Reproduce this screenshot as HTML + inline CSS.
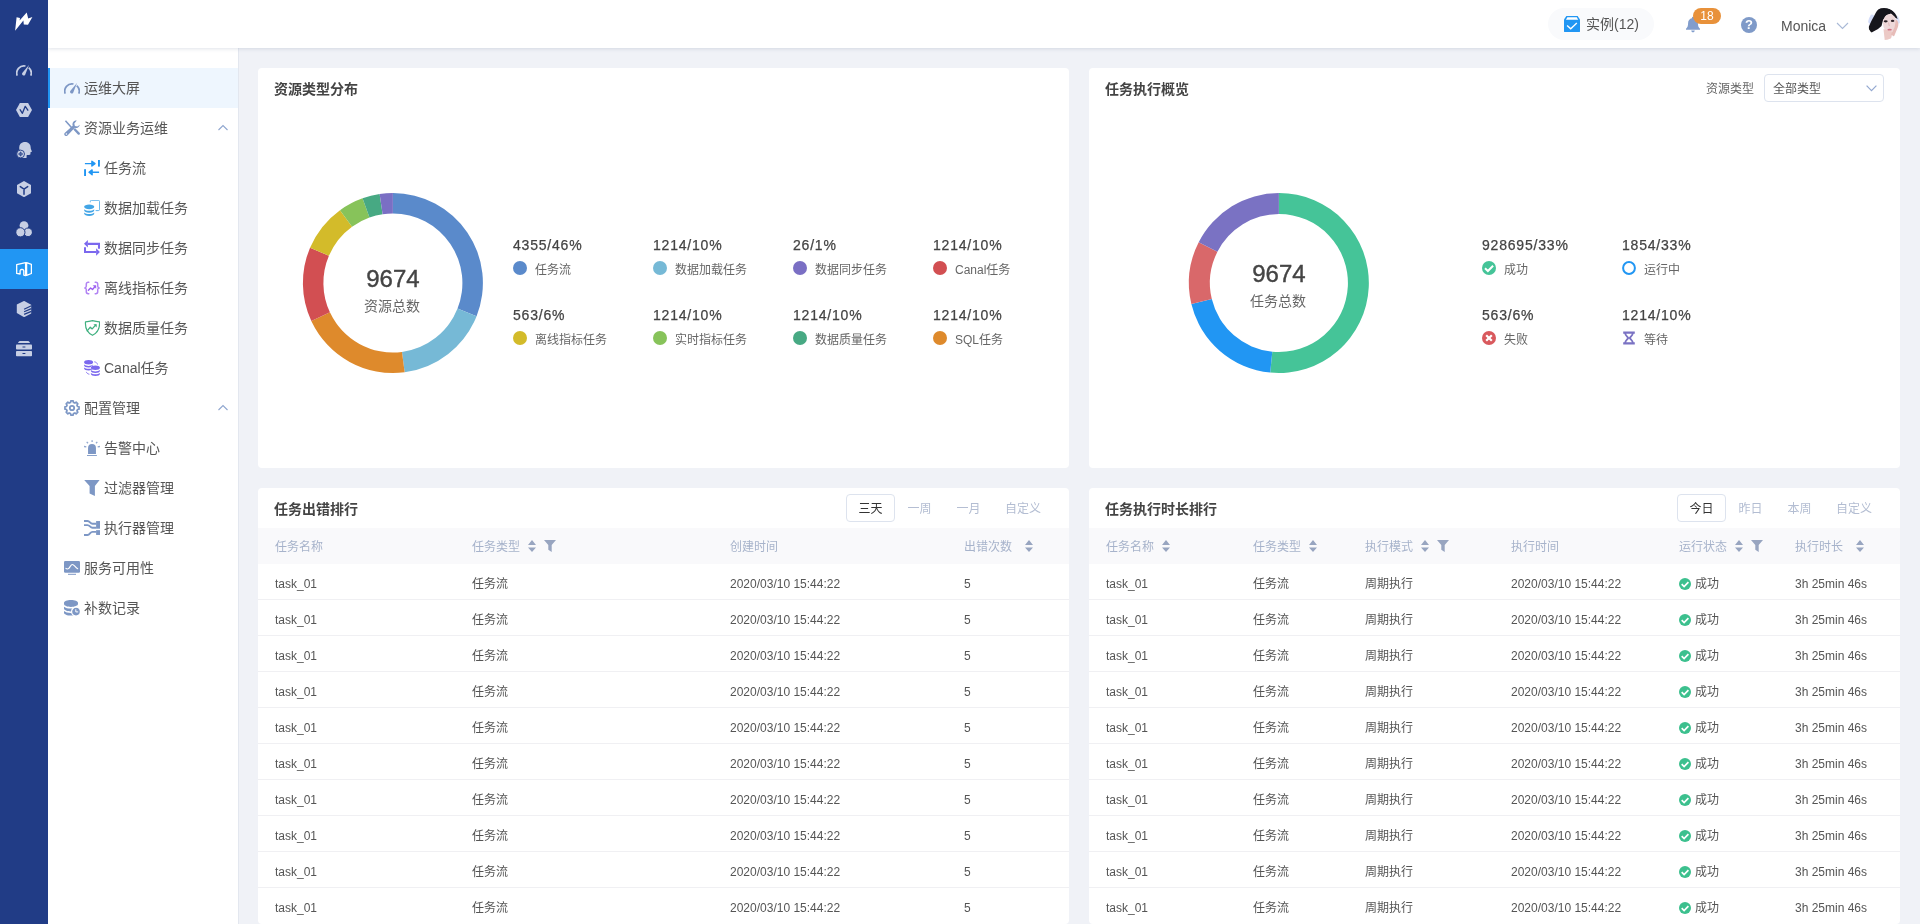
<!DOCTYPE html>
<html lang="zh-CN">
<head>
<meta charset="utf-8">
<title>运维大屏</title>
<style>
*{box-sizing:border-box;margin:0;padding:0}
html,body{width:1920px;height:924px;overflow:hidden}
body{font-family:"Liberation Sans","Noto Sans CJK SC",sans-serif;font-size:12px;color:#555;background:#f0f2f7;position:relative}
.rail{position:absolute;left:0;top:0;width:48px;height:924px;background:#213c86;z-index:5}
.rail .ri{position:absolute;left:0;width:48px;height:40px}
.rail .ri svg{position:absolute;left:15px;top:11px;width:18px;height:18px}
.rail .ri.on{background:#2196f3}
.header{position:absolute;left:48px;top:0;width:1872px;height:48px;background:#fff;box-shadow:0 1px 4px rgba(60,80,120,.16);z-index:4;will-change:transform}
.side{position:absolute;left:48px;top:48px;width:190px;height:876px;background:#fff;box-shadow:1px 0 0 #e3e7ef;z-index:3;will-change:transform}
.mi{position:absolute;left:0;width:190px;height:40px;line-height:40px;font-size:14px;color:#555;white-space:nowrap}
.mi.on{background:#eef6fe;box-shadow:inset 2px 0 0 #2196f3}
.mi svg.ic{position:absolute;top:12px;width:16px;height:16px}
.mi.l1 svg.ic{left:16px}
.mi.l2 svg.ic{left:36px}
.mi.l1 span{position:absolute;left:36px;top:0}
.mi.l2 span{position:absolute;left:56px;top:0}
.mi svg.ar{position:absolute;left:170px;top:16px;width:10px;height:8px}
.card{position:absolute;background:#fff;border-radius:4px;will-change:transform}
.ct{position:absolute;left:16px;top:12px;font-size:14px;font-weight:bold;color:#444;line-height:18px}
/*cards*/
.dn{position:absolute;margin-top:1px;-webkit-text-stroke:.4px #444;width:100px;text-align:center;font-size:24px;line-height:30px;color:#444}
.dl{position:absolute;margin-left:-1px;width:100px;text-align:center;font-size:14px;line-height:20px;color:#666}
.ln{position:absolute;font-size:14px;line-height:20px;color:#444;white-space:nowrap;letter-spacing:.8px;margin-top:1px;-webkit-text-stroke:.25px #444}
.ld{position:absolute;width:14px;height:14px;border-radius:7px}
.li{position:absolute;width:14px;height:14px}
.ll{position:absolute;font-size:12px;line-height:16px;color:#666;white-space:nowrap;margin-top:2px}
.tb{position:absolute;top:6px;height:28px;line-height:30px;text-align:center;font-size:12px;color:#b3bdd2}
.tb.on{border:1px solid #dde3ee;border-radius:4px;line-height:28px;color:#333;background:#fff}
.th{position:absolute;left:0;top:40px;width:811px;height:36px;background:#f9f9fb;color:#a7b3cb;font-size:12px;line-height:36px}
.th span{position:absolute;top:1px;white-space:nowrap}
.tr span{position:absolute;top:2.5px;white-space:nowrap}
.tr:last-child{border-bottom:0}
.so{position:absolute;top:12px;width:8px;height:12px}
.fi{position:absolute;top:12px;width:12px;height:12px}
.tr{position:absolute;left:0;width:811px;height:36px;border-bottom:1px solid #f0f0f3;color:#555;font-size:12px;line-height:35px}
.si{position:absolute;top:14px;width:12px;height:12px}
/*endcards*/
</style>
</head>
<body>
<div class="rail" id="rail"><svg style="position:absolute;left:0;top:0" width="48" height="48" viewBox="0 0 48 48"><path d="M16.6 17.3L20 17.9 19.6 20.6 26.7 12.4 28.2 18.4 32.4 17.1 28 24.7 23.8 24.5 23.4 20.4 15.1 30.8Z" fill="#fff"/></svg><svg style="position:absolute;left:16px;top:62px" width="16" height="16" viewBox="0 0 16 16"><path d="M1.22 13.66A7.25 7.25 0 0 1 9.5 4M12.7 5.6A7.25 7.25 0 0 1 14.78 13.66" fill="none" stroke="#c7cfe4" stroke-width="1.7"/><path d="M13 2.9L9.16 12.72A1.7 1.7 0 0 1 6.24 10.98Z" fill="#c7cfe4"/></svg><svg style="position:absolute;left:16px;top:102px" width="16" height="16" viewBox="0 0 16 16"><path d="M3.9.9h8.2l3.9 7-3.9 7.2H3.9L0 7.9Z" fill="#c7cfe4"/><path d="M4.05 7.7l2.35 3.6 2.85-7 2.6 3.9" fill="none" stroke="#213c86" stroke-width="1.3" stroke-linejoin="round" stroke-linecap="round"/></svg><svg style="position:absolute;left:16px;top:142px" width="16" height="16" viewBox="0 0 16 16"><path d="M9-.1c3.5 0 5.7 2.4 5.7 5.7 0 1 .3 1.7 1.2 3.7v.4l-1.3.3-.2 2c-.1.7-.5.9-1.4.9h-2.3L10.5 16H6V9L3.5 7.7C3.2 6.7 3.2 5.9 3.2 5.4 3.2 2.3 5.6-.1 9-.1Z" fill="#c7cfe4"/><circle cx="4.6" cy="12" r="3.9" fill="#c7cfe4" stroke="#213c86" stroke-width=".9"/><path d="M2.2 12h4.8M4.6 9.6v4.8" stroke="#213c86" stroke-width=".7"/><circle cx="4.6" cy="12" r="1.5" fill="none" stroke="#213c86" stroke-width=".7"/></svg><svg style="position:absolute;left:16px;top:181px" width="16" height="16" viewBox="0 0 16 16"><path d="M8 0l7 4v8.2l-7 4-7-4V4Z" fill="#c7cfe4"/><path d="M4.3 5.6L8 8.2l3.7-2.6M8 8.2v5" fill="none" stroke="#213c86" stroke-width="1.5" stroke-linecap="round"/></svg><svg style="position:absolute;left:16px;top:221px" width="16" height="16" viewBox="0 0 16 16"><circle cx="8" cy="4.6" r="4.4" fill="#c7cfe4"/><circle cx="12.1" cy="11.3" r="4.3" fill="#c7cfe4" stroke="#213c86" stroke-width="1"/><circle cx="4.4" cy="11.3" r="4.6" fill="#c7cfe4" stroke="#213c86" stroke-width="1"/></svg><div style="position:absolute;left:0;top:249px;width:48px;height:40px;background:#2196f3"></div><svg style="position:absolute;left:16px;top:261px" width="16" height="16" viewBox="0 0 16 16"><path d="M9.6 1.6L.7 3.6V12.4L4.1 13V9.9a1.4 1.4 0 0 1 1.4-1.4h.9a1.4 1.4 0 0 1 1.4 1.4V14.1L9.6 14.5ZM10.6 1.6L15.4 3.3V12.5L10.6 14.4Z" fill="none" stroke="#fff" stroke-width="1.3" stroke-linejoin="round"/></svg><svg style="position:absolute;left:16px;top:301px" width="16" height="16" viewBox="0 0 16 16"><path d="M8.1-.1l7.1 3.9v8.8l-7.1 3.6L.8 12.1V3.5Z" fill="#c7cfe4"/><path d="M8.1 8.2L15.4 4.7M8.1 10.8L15.4 7.6M8.1 13.4L15.4 10.4" stroke="#213c86" stroke-width="1.2"/></svg><svg style="position:absolute;left:16px;top:341px" width="16" height="16" viewBox="0 0 16 16"><path d="M4.5-.1h7c1.2 0 2 .9 2.5 2.1H2C2.5.8 3.3-.1 4.5-.1Z" fill="#c7cfe4"/><rect x="0" y="3.4" width="16" height="5.1" rx=".8" fill="#c7cfe4"/><rect x="0" y="9.9" width="16" height="5.4" rx=".8" fill="#c7cfe4"/><path d="M6.9 6h2.1M6.9 12.5h2.1" stroke="#213c86" stroke-width="1" stroke-linecap="round"/></svg></div><!--/rail-->
<div class="header" id="header"><div style="position:absolute;left:1500px;top:8px;width:106px;height:32px;border-radius:16px;background:#f9fafc"></div><svg style="position:absolute;left:1516px;top:16px" width="16" height="16" viewBox="0 0 16 16"><path d="M2.4 0h11.2L16 3.4V15.6a.4.4 0 0 1-.4.4H.4a.4.4 0 0 1-.4-.4V3.4Z" fill="#2196f3"/><path d="M3.4 1.3h9.4l1.4 2.5H1.9Z" fill="#fff"/><path d="M3.1 9.5l3.6 3.3 6.1-5.7" fill="none" stroke="#fff" stroke-width="1.4"/></svg><div style="position:absolute;left:1538px;top:14px;font-size:14px;line-height:20px;color:#555;white-space:nowrap">实例(12)</div><svg style="position:absolute;left:1637px;top:16px" width="16" height="18" viewBox="0 0 16 18"><path d="M8 .8a1.1 1.1 0 0 1 1.1 1.1v.4c2.3.5 3.8 2.4 3.8 4.8 0 3.2.8 4.6 2.1 5.6v1H1v-1c1.3-1 2.1-2.4 2.1-5.6 0-2.4 1.5-4.3 3.8-4.8v-.4A1.1 1.1 0 0 1 8 .8ZM6.2 14.6h3.6a1.8 1.8 0 0 1-3.6 0Z" fill="#829dcc"/></svg><div style="position:absolute;left:1645px;top:8px;width:28px;height:16px;border-radius:8px;background:#e8913a;color:#fff;font-size:12px;line-height:16px;text-align:center">18</div><div style="position:absolute;left:1693px;top:17px;width:16px;height:16px;border-radius:8px;background:#7f9ac8;color:#fff;font-size:13px;font-weight:bold;line-height:16px;text-align:center">?</div><div style="position:absolute;left:1733px;top:16px;font-size:14px;line-height:20px;color:#555">Monica</div><svg style="position:absolute;left:1788px;top:22px" width="13" height="8" viewBox="0 0 13 8"><path d="M1 1l5.5 5.5L12 1" fill="none" stroke="#a9b9d6" stroke-width="1.1"/></svg><svg style="position:absolute;left:1820px;top:8px" width="32" height="32" viewBox="0 0 32 32"><defs><clipPath id="avc"><circle cx="16" cy="16" r="16"/></clipPath><filter id="avb" x="-20%" y="-20%" width="140%" height="140%"><feGaussianBlur stdDeviation=".65"/></filter></defs><g clip-path="url(#avc)"><rect width="32" height="32" fill="#fdfdff"/><g filter="url(#avb)"><ellipse cx="3.5" cy="11.5" rx="4" ry="5" fill="#d3dcf8"/><ellipse cx="30.5" cy="11.5" rx="2.2" ry="4" fill="#dbe3fa"/><path d="M12 .2C15-.8 19.5-.6 22.5 1.2 26 3 28.6 6.5 29.6 11L27 9.5 23 5.5 18 7.5 15 12 13.5 18 10 21 3.6 24.4C1.5 23 .3 21 .9 18.5 2.4 15 4.5 10.5 6.5 7.2 8 4 9.5 1.5 12 .2Z" fill="#17141b"/><ellipse cx="21.8" cy="15.2" rx="6.8" ry="9.2" fill="#eed8d9"/><path d="M15.5 21l1.2 11h6l2-8Z" fill="#ecc9c6"/><path d="M28 11.5c2.5 1.5 3 5 1.5 8.5l-3.5 8.5-3-2 3.5-7Z" fill="#e7bcb8"/><ellipse cx="21.6" cy="21.7" rx="2.2" ry=".9" fill="#cf6e80"/><ellipse cx="17.7" cy="13.3" rx="2" ry="1.1" fill="#2a2025"/><ellipse cx="24.6" cy="12.9" rx="1.8" ry="1.1" fill="#33282d"/><path d="M20.5 14.5l.8 3.5" stroke="#d9b0b0" stroke-width=".8"/></g></g></svg></div><!--/header-->
<div class="side" id="side"><div class="mi l1 on" style="top:20px"><svg class="ic" viewBox="0 0 16 16"><path d="M1.22 13.66A7.25 7.25 0 0 1 9.5 4M12.7 5.6A7.25 7.25 0 0 1 14.78 13.66" fill="none" stroke="#7d97c5" stroke-width="1.7"/><path d="M13 2.9L9.16 12.72A1.7 1.7 0 0 1 6.24 10.98Z" fill="#7d97c5"/></svg><span>运维大屏</span></div><div class="mi l1" style="top:60px"><svg class="ic" viewBox="0 0 16 16"><path d="M.9 1.2L2 .3 9.2 8.2 8 9.3Z" fill="#7d97c5"/><path d="M9.3 9.6l1.7-1.5 4.6 4.7a1.15 1.15 0 0 1-1.7 1.6Z" fill="#7d97c5"/><path d="M11.3.4a4.1 4.1 0 0 0-2.6 5.3L.9 12.7a1.9 1.9 0 0 0 2.6 2.8L10.8 7.8A4.1 4.1 0 0 0 15.9 4.8L13.3 6.6 10.9 6.1 10.3 3.6 12.8.6A4 4 0 0 0 11.3.4Z" fill="#7d97c5"/><circle cx="2.4" cy="14" r=".8" fill="#fff"/></svg><span>资源业务运维</span><svg class="ar" viewBox="0 0 10 8"><path d="M.5 6L5 1.5 9.5 6" fill="none" stroke="#8fa6cf" stroke-width="1.1"/></svg></div><div class="mi l2" style="top:100px"><svg class="ic" viewBox="0 0 16 16"><path d="M.9 3.6h9.3M7.9 1.2l3.1 2.4-3.1 2.4Z" stroke="#2196f3" stroke-width="1.4" fill="#2196f3" stroke-linejoin="round"/><rect x="14" y="0" width="1.9" height="6.6" fill="#2196f3"/><path d="M15.1 12.3H5.8M8.1 9.9L5 12.3l3.1 2.4Z" stroke="#2196f3" stroke-width="1.4" fill="#2196f3" stroke-linejoin="round"/><rect x=".1" y="9.2" width="1.9" height="6.8" fill="#2196f3"/></svg><span>任务流</span></div><div class="mi l2" style="top:140px"><svg class="ic" viewBox="0 0 16 16"><path d="M6.3 2.3V1.6A1.3 1.3 0 0 1 7.6.3h6.7a1.3 1.3 0 0 1 1.3 1.3v7.7a1.3 1.3 0 0 1-1.3 1.3h-2.7" fill="none" stroke="#4aa8e8" stroke-width=".9"/><path d="M.2 6.6C.2 5.4 2.4 4.4 5.2 4.4s5 1 5 2.2v.5c0 1.2-2.2 2.2-5 2.2s-5-1-5-2.2ZM.2 9.3c1 1 2.9 1.5 5 1.5s4-.5 5-1.5v1.2c0 1.2-2.2 2.2-5 2.2s-5-1-5-2.2ZM.2 12.6c1 1 2.9 1.5 5 1.5s4-.5 5-1.5v1.1c0 1.2-2.2 2.2-5 2.2s-5-1-5-2.2Z" fill="#42a5e6"/></svg><span>数据加载任务</span></div><div class="mi l2" style="top:180px"><svg class="ic" viewBox="0 0 16 16"><path d="M3.8 3.9H15V8.7" fill="none" stroke="#7b68ee" stroke-width="2.1"/><path d="M3.9 0V7.5L0 3.8Z" fill="#7b68ee"/><path d="M.95 7.2V12H12.1" fill="none" stroke="#7b68ee" stroke-width="2.1"/><path d="M12.1 8.2V15.7L15.9 11.9Z" fill="#7b68ee"/></svg><span>数据同步任务</span></div><div class="mi l2" style="top:220px"><svg class="ic" viewBox="0 0 16 16"><path d="M4.8 2.2H4.2a1.9 1.9 0 0 0-1.9 1.9v2A1.9 1.9 0 0 1 .3 7.95 1.9 1.9 0 0 1 2.3 9.8v2a1.9 1.9 0 0 0 1.9 1.9h.6M11.2 2.2h.6a1.9 1.9 0 0 1 1.9 1.9v2A1.9 1.9 0 0 0 15.7 7.95 1.9 1.9 0 0 0 13.7 9.8v2a1.9 1.9 0 0 1-1.9 1.9h-.6" fill="none" stroke="#b183f3" stroke-width="1.5" stroke-linecap="round"/><path d="M4.4 10.3l2.2-2.3 1.9 1.5 2.5-2.9" fill="none" stroke="#9a5cf0" stroke-width="1.4" stroke-linecap="round" stroke-linejoin="round"/><path d="M9.2 5.6h2.7v2.7Z" fill="#9a5cf0" stroke="#9a5cf0" stroke-width=".5" stroke-linejoin="round"/></svg><span>离线指标任务</span></div><div class="mi l2" style="top:260px"><svg class="ic" viewBox="0 0 16 16"><path d="M8.5.7C6.3 1.2 3.9 1.6 1.5 1.8 1 8.2 3.4 12.9 8.5 15.3 13.6 12.9 16 8.2 15.5 1.8 13.1 1.6 10.7 1.2 8.5.7Z" fill="none" stroke="#3fb07f" stroke-width="1.2" stroke-linejoin="round"/><path d="M3.2 10.8l3.1-3.6 1.9 1.7 3.6-4" fill="none" stroke="#3fb07f" stroke-width="1.3" stroke-linejoin="round" stroke-linecap="round"/><path d="M9.4 4.2h3.3v3.3Z" fill="#3fb07f"/></svg><span>数据质量任务</span></div><div class="mi l2" style="top:300px"><svg class="ic" viewBox="0 0 16 16"><g fill="#7b68ee"><path d="M.1 2.1C.1 1 2.1.1 4.6.1s4.5.9 4.5 2v.4c0 1.1-2 2-4.5 2S.1 3.6.1 2.5ZM.1 4.6c.9.9 2.6 1.3 4.5 1.3S8.2 5.5 9.1 4.6v1c0 1.1-2 2-4.5 2S.1 6.7.1 5.6ZM.1 7.5c.9.9 2.6 1.3 4.5 1.3S8.2 8.4 9.1 7.5v1c0 1.1-2 2-4.5 2S.1 9.6.1 8.5Z"/></g><g fill="#7b68ee" stroke="#fff" stroke-width="1" paint-order="stroke"><path d="M6.9 7.6c0-1.1 2-2 4.5-2s4.5.9 4.5 2V8c0 1.1-2 2-4.5 2s-4.5-.9-4.5-2ZM6.9 10.1c.9.9 2.6 1.3 4.5 1.3s3.6-.4 4.5-1.3v1c0 1.1-2 2-4.5 2s-4.5-.9-4.5-2ZM6.9 13c.9.9 2.6 1.3 4.5 1.3s3.6-.4 4.5-1.3v1c0 1.1-2 2-4.5 2s-4.5-.9-4.5-2Z"/></g><path d="M10.3 1.8c1.7.2 2.9 1.2 3.2 2.7M5.4 14.2C3.8 14 2.7 13.2 2.4 11.9" fill="none" stroke="#7b68ee" stroke-width=".9"/></svg><span>Canal任务</span></div><div class="mi l1" style="top:340px"><svg class="ic" viewBox="0 0 16 16"><path d="M6.52 2.49L6.82 0.95L9.18 0.95L9.48 2.49L10.85 3.06L12.15 2.18L13.82 3.85L12.94 5.15L13.51 6.52L15.05 6.82L15.05 9.18L13.51 9.48L12.94 10.85L13.82 12.15L12.15 13.82L10.85 12.94L9.48 13.51L9.18 15.05L6.82 15.05L6.52 13.51L5.15 12.94L3.85 13.82L2.18 12.15L3.06 10.85L2.49 9.48L0.95 9.18L0.95 6.82L2.49 6.52L3.06 5.15L2.18 3.85L3.85 2.18L5.15 3.06Z" fill="none" stroke="#7d97c5" stroke-width="1.7" stroke-linejoin="round"/><circle cx="8" cy="8" r="2.2" fill="none" stroke="#7d97c5" stroke-width="1.8"/></svg><span>配置管理</span><svg class="ar" viewBox="0 0 10 8"><path d="M.5 6L5 1.5 9.5 6" fill="none" stroke="#8fa6cf" stroke-width="1.1"/></svg></div><div class="mi l2" style="top:380px"><svg class="ic" viewBox="0 0 16 16"><path d="M4.05 13.9V7.9a3.95 3.95 0 0 1 7.9 0V13.9Z" fill="#7d97c5"/><path d="M3 15.5h9.9" stroke="#7d97c5" stroke-width=".9"/><path d="M8.1 .2v1.8M2.7 1.9l1.3 1.4M13.3 1.9l-1.3 1.4M0 6.5l2.3.4M16 6.5l-2.3.4" stroke="#7d97c5" stroke-width="1.3" opacity=".85"/></svg><span>告警中心</span></div><div class="mi l2" style="top:420px"><svg class="ic" viewBox="0 0 16 16"><path d="M.2 0h15.4L10.9 5.9V15.9L5.6 13.4V5.9Z" fill="#7d97c5"/></svg><span>过滤器管理</span></div><div class="mi l2" style="top:460px"><svg class="ic" viewBox="0 0 16 16"><path d="M0 .95H3.5C6 .95 6 3.8 8.5 3.8H12.2M0 5.1H3.5C6 5.1 6 7.7 8.5 7.7H12.2M0 14.95H3.5C6 14.95 6 11.85 8.5 11.85H12.2" fill="none" stroke="#7d97c5" stroke-width="1.9"/><rect x="12.1" y="1.05" width="3.9" height="7.65" fill="#7d97c5"/><rect x="12.1" y="10.15" width="3.9" height="4.8" fill="#7d97c5"/></svg><span>执行器管理</span></div><div class="mi l1" style="top:500px"><svg class="ic" viewBox="0 0 16 16"><rect x="0" y="1" width="16" height="11.8" rx="1.2" fill="#7d97c5"/><path d="M4 14.3h8" stroke="#7d97c5" stroke-width="1"/><path d="M1.9 8.4c.9.8 2 .8 2.9 0 1.3-1.2 2-3.9 3.6-3.9 1.9 0 2.6 3 5.3 4.2" fill="none" stroke="#fff" stroke-width="1.1" stroke-linecap="round"/></svg><span>服务可用性</span></div><div class="mi l1" style="top:540px"><svg class="ic" viewBox="0 0 16 16"><path d="M0 3C0 1.4 3.1.1 7 .1s7 1.3 7 2.9v1c0 1.6-3.1 2.9-7 2.9S0 5.6 0 4ZM0 6.7C1.4 8 4 8.6 7 8.6s5.6-.6 7-1.9v1.8c0 1.6-3.1 2.9-7 2.9S0 10.1 0 8.5ZM0 11.1c1.4 1.3 4 1.9 7 1.9s5.6-.6 7-1.9v1.6c0 1.6-3.1 2.9-7 2.9S0 14.3 0 12.7Z" fill="#7d97c5"/><circle cx="12" cy="11.6" r="4.4" fill="#7d97c5" stroke="#fff" stroke-width="1.2"/><path d="M11.8 9.3v2.6h2.4" fill="none" stroke="#fff" stroke-width="1"/></svg><span>补数记录</span></div></div><!--/side-->
<div class="card" id="c1" style="left:258px;top:68px;width:811px;height:400px"><div class="ct">资源类型分布</div><svg style="position:absolute;left:0;top:0" width="260" height="399" viewBox="0 0 260 399"><path d="M134.90 125.00A90 90 0 0 1 218.58 248.13L199.52 240.58A69.5 69.5 0 0 0 134.90 145.50Z" fill="#5a8acb"/><path d="M218.58 248.13A90 90 0 0 1 146.65 304.23L143.97 283.91A69.5 69.5 0 0 0 199.52 240.58Z" fill="#76b9d6"/><path d="M146.65 304.23A90 90 0 0 1 53.33 253.04L71.91 244.37A69.5 69.5 0 0 0 143.97 283.91Z" fill="#de8a2c"/><path d="M53.33 253.04A90 90 0 0 1 52.05 179.83L70.92 187.84A69.5 69.5 0 0 0 71.91 244.37Z" fill="#d24f52"/><path d="M52.05 179.83A90 90 0 0 1 82.00 142.19L94.05 158.77A69.5 69.5 0 0 0 70.92 187.84Z" fill="#d3bb2a"/><path d="M82.00 142.19A90 90 0 0 1 104.56 130.27L111.47 149.57A69.5 69.5 0 0 0 94.05 158.77Z" fill="#87c35a"/><path d="M104.56 130.27A90 90 0 0 1 121.60 125.99L124.63 146.26A69.5 69.5 0 0 0 111.47 149.57Z" fill="#47a983"/><path d="M121.60 125.99A90 90 0 0 1 134.90 125.00L134.90 145.50A69.5 69.5 0 0 0 124.63 146.26Z" fill="#7a6fc4"/></svg><div class="dn" style="left:84.9px;top:195px">9674</div><div class="dl" style="left:84.9px;top:228px">资源总数</div><div class="ln" style="left:255px;top:166px">4355/46%</div><div class="ld" style="left:255px;top:193px;background:#5a8acb"></div><div class="ll" style="left:277px;top:192px">任务流</div><div class="ln" style="left:395px;top:166px">1214/10%</div><div class="ld" style="left:395px;top:193px;background:#76b9d6"></div><div class="ll" style="left:417px;top:192px">数据加载任务</div><div class="ln" style="left:535px;top:166px">26/1%</div><div class="ld" style="left:535px;top:193px;background:#7a6fc4"></div><div class="ll" style="left:557px;top:192px">数据同步任务</div><div class="ln" style="left:675px;top:166px">1214/10%</div><div class="ld" style="left:675px;top:193px;background:#d24f52"></div><div class="ll" style="left:697px;top:192px">Canal任务</div><div class="ln" style="left:255px;top:236px">563/6%</div><div class="ld" style="left:255px;top:263px;background:#d3bb2a"></div><div class="ll" style="left:277px;top:262px">离线指标任务</div><div class="ln" style="left:395px;top:236px">1214/10%</div><div class="ld" style="left:395px;top:263px;background:#87c35a"></div><div class="ll" style="left:417px;top:262px">实时指标任务</div><div class="ln" style="left:535px;top:236px">1214/10%</div><div class="ld" style="left:535px;top:263px;background:#47a983"></div><div class="ll" style="left:557px;top:262px">数据质量任务</div><div class="ln" style="left:675px;top:236px">1214/10%</div><div class="ld" style="left:675px;top:263px;background:#de8a2c"></div><div class="ll" style="left:697px;top:262px">SQL任务</div></div><!--/c1-->
<div class="card" id="c2" style="left:1089px;top:68px;width:811px;height:400px"><div class="ct">任务执行概览</div><svg style="position:absolute;left:0;top:0" width="300" height="399" viewBox="0 0 300 399"><path d="M189.90 125.00A90 90 0 1 1 181.27 304.59L183.29 283.68A69 69 0 1 0 189.90 146.00Z" fill="#45c498"/><path d="M181.27 304.59A90 90 0 0 1 102.39 236.01L122.81 231.11A69 69 0 0 0 183.29 283.68Z" fill="#2196f3"/><path d="M102.39 236.01A90 90 0 0 1 109.71 174.14L128.42 183.67A69 69 0 0 0 122.81 231.11Z" fill="#d9686a"/><path d="M109.71 174.14A90 90 0 0 1 189.90 125.00L189.90 146.00A69 69 0 0 0 128.42 183.67Z" fill="#7a72c3"/></svg><div class="dn" style="left:139.9px;top:190px">9674</div><div class="dl" style="left:139.9px;top:223px">任务总数</div><div class="ln" style="left:393px;top:166px">928695/33%</div><svg class="li" style="left:393px;top:193px" viewBox="0 0 14 14"><circle cx="7" cy="7" r="7" fill="#45c498"/><path d="M3 7.2l2.9 2.8 5.2-5.3" fill="none" stroke="#fff" stroke-width="2"/></svg><div class="ll" style="left:415px;top:192px">成功</div><div class="ln" style="left:533px;top:166px">1854/33%</div><svg class="li" style="left:533px;top:193px" viewBox="0 0 14 14"><circle cx="7" cy="7" r="5.9" fill="none" stroke="#2196f3" stroke-width="2"/></svg><div class="ll" style="left:555px;top:192px">运行中</div><div class="ln" style="left:393px;top:236px">563/6%</div><svg class="li" style="left:393px;top:263px" viewBox="0 0 14 14"><circle cx="7" cy="7" r="7" fill="#d9595d"/><path d="M4.2 4.2l5.6 5.6M9.8 4.2l-5.6 5.6" fill="none" stroke="#fff" stroke-width="2.2"/></svg><div class="ll" style="left:415px;top:262px">失败</div><div class="ln" style="left:533px;top:236px">1214/10%</div><svg class="li" style="left:533px;top:263px" viewBox="0 0 14 14"><path d="M1.2 1.6h11.6M1.2 12.4h11.6" stroke="#7a72c3" stroke-width="2.4"/><path d="M3.2 2c0 2.6 2.2 3.6 3 5-.8 1.4-3 2.4-3 5M10.8 2c0 2.6-2.2 3.6-3 5 .8 1.4 3 2.4 3 5" fill="none" stroke="#7a72c3" stroke-width="1.8"/></svg><div class="ll" style="left:555px;top:262px">等待</div><div style="position:absolute;left:617px;top:12px;font-size:12px;line-height:18px;color:#666">资源类型</div><div style="position:absolute;left:675px;top:6px;width:120px;height:28px;border:1px solid #dde3ee;border-radius:4px;font-size:12px;line-height:28px;padding-left:8px;color:#555">全部类型<svg style="position:absolute;left:101px;top:10px" width="11" height="7" viewBox="0 0 11 7"><path d="M.6.7l4.9 5L10.4.7" fill="none" stroke="#93a8d0" stroke-width="1.2"/></svg></div></div><!--/c2-->
<div class="card" id="c3" style="left:258px;top:488px;width:811px;height:436px;overflow:hidden"><div class="ct">任务出错排行</div><div class="tb on" style="left:588px;width:49px">三天</div><div class="tb" style="left:637px;width:49px">一周</div><div class="tb" style="left:686px;width:49px">一月</div><div class="tb" style="left:735px;width:60px">自定义</div><div class="th"><span style="left:17px">任务名称</span><span style="left:214px">任务类型</span><svg class="so" style="left:270px" viewBox="0 0 8 12"><path d="M4 0l4 5H0ZM4 12L0 7.5h8Z" fill="#98a5c0"/></svg><svg class="fi" style="left:286px" viewBox="0 0 12 12"><path d="M0 0h12L7.7 5V12L4.3 9.8V5Z" fill="#98a5c0"/></svg><span style="left:472px">创建时间</span><span style="left:706px">出错次数</span><svg class="so" style="left:767px" viewBox="0 0 8 12"><path d="M4 0l4 5H0ZM4 12L0 7.5h8Z" fill="#98a5c0"/></svg></div><div class="tr" style="top:76px"><span style="left:17px">task_01</span><span style="left:214px">任务流</span><span style="left:472px">2020/03/10 15:44:22</span><span style="left:706px">5</span></div><div class="tr" style="top:112px"><span style="left:17px">task_01</span><span style="left:214px">任务流</span><span style="left:472px">2020/03/10 15:44:22</span><span style="left:706px">5</span></div><div class="tr" style="top:148px"><span style="left:17px">task_01</span><span style="left:214px">任务流</span><span style="left:472px">2020/03/10 15:44:22</span><span style="left:706px">5</span></div><div class="tr" style="top:184px"><span style="left:17px">task_01</span><span style="left:214px">任务流</span><span style="left:472px">2020/03/10 15:44:22</span><span style="left:706px">5</span></div><div class="tr" style="top:220px"><span style="left:17px">task_01</span><span style="left:214px">任务流</span><span style="left:472px">2020/03/10 15:44:22</span><span style="left:706px">5</span></div><div class="tr" style="top:256px"><span style="left:17px">task_01</span><span style="left:214px">任务流</span><span style="left:472px">2020/03/10 15:44:22</span><span style="left:706px">5</span></div><div class="tr" style="top:292px"><span style="left:17px">task_01</span><span style="left:214px">任务流</span><span style="left:472px">2020/03/10 15:44:22</span><span style="left:706px">5</span></div><div class="tr" style="top:328px"><span style="left:17px">task_01</span><span style="left:214px">任务流</span><span style="left:472px">2020/03/10 15:44:22</span><span style="left:706px">5</span></div><div class="tr" style="top:364px"><span style="left:17px">task_01</span><span style="left:214px">任务流</span><span style="left:472px">2020/03/10 15:44:22</span><span style="left:706px">5</span></div><div class="tr" style="top:400px"><span style="left:17px">task_01</span><span style="left:214px">任务流</span><span style="left:472px">2020/03/10 15:44:22</span><span style="left:706px">5</span></div></div><!--/c3-->
<div class="card" id="c4" style="left:1089px;top:488px;width:811px;height:436px;overflow:hidden"><div class="ct">任务执行时长排行</div><div class="tb on" style="left:588px;width:49px">今日</div><div class="tb" style="left:637px;width:49px">昨日</div><div class="tb" style="left:686px;width:49px">本周</div><div class="tb" style="left:735px;width:60px">自定义</div><div class="th"><span style="left:17px">任务名称</span><svg class="so" style="left:73px" viewBox="0 0 8 12"><path d="M4 0l4 5H0ZM4 12L0 7.5h8Z" fill="#98a5c0"/></svg><span style="left:164px">任务类型</span><svg class="so" style="left:220px" viewBox="0 0 8 12"><path d="M4 0l4 5H0ZM4 12L0 7.5h8Z" fill="#98a5c0"/></svg><span style="left:276px">执行模式</span><svg class="so" style="left:332px" viewBox="0 0 8 12"><path d="M4 0l4 5H0ZM4 12L0 7.5h8Z" fill="#98a5c0"/></svg><svg class="fi" style="left:348px" viewBox="0 0 12 12"><path d="M0 0h12L7.7 5V12L4.3 9.8V5Z" fill="#98a5c0"/></svg><span style="left:422px">执行时间</span><span style="left:590px">运行状态</span><svg class="so" style="left:646px" viewBox="0 0 8 12"><path d="M4 0l4 5H0ZM4 12L0 7.5h8Z" fill="#98a5c0"/></svg><svg class="fi" style="left:662px" viewBox="0 0 12 12"><path d="M0 0h12L7.7 5V12L4.3 9.8V5Z" fill="#98a5c0"/></svg><span style="left:706px">执行时长</span><svg class="so" style="left:767px" viewBox="0 0 8 12"><path d="M4 0l4 5H0ZM4 12L0 7.5h8Z" fill="#98a5c0"/></svg></div><div class="tr" style="top:76px"><span style="left:17px">task_01</span><span style="left:164px">任务流</span><span style="left:276px">周期执行</span><span style="left:422px">2020/03/10 15:44:22</span><svg class="si" style="left:590px" viewBox="0 0 12 12"><circle cx="6" cy="6" r="6" fill="#3cc08e"/><path d="M2.7 6.2l2.4 2.3 4.3-4.4" fill="none" stroke="#fff" stroke-width="1.7"/></svg><span style="left:606px">成功</span><span style="left:706px">3h 25min 46s</span></div><div class="tr" style="top:112px"><span style="left:17px">task_01</span><span style="left:164px">任务流</span><span style="left:276px">周期执行</span><span style="left:422px">2020/03/10 15:44:22</span><svg class="si" style="left:590px" viewBox="0 0 12 12"><circle cx="6" cy="6" r="6" fill="#3cc08e"/><path d="M2.7 6.2l2.4 2.3 4.3-4.4" fill="none" stroke="#fff" stroke-width="1.7"/></svg><span style="left:606px">成功</span><span style="left:706px">3h 25min 46s</span></div><div class="tr" style="top:148px"><span style="left:17px">task_01</span><span style="left:164px">任务流</span><span style="left:276px">周期执行</span><span style="left:422px">2020/03/10 15:44:22</span><svg class="si" style="left:590px" viewBox="0 0 12 12"><circle cx="6" cy="6" r="6" fill="#3cc08e"/><path d="M2.7 6.2l2.4 2.3 4.3-4.4" fill="none" stroke="#fff" stroke-width="1.7"/></svg><span style="left:606px">成功</span><span style="left:706px">3h 25min 46s</span></div><div class="tr" style="top:184px"><span style="left:17px">task_01</span><span style="left:164px">任务流</span><span style="left:276px">周期执行</span><span style="left:422px">2020/03/10 15:44:22</span><svg class="si" style="left:590px" viewBox="0 0 12 12"><circle cx="6" cy="6" r="6" fill="#3cc08e"/><path d="M2.7 6.2l2.4 2.3 4.3-4.4" fill="none" stroke="#fff" stroke-width="1.7"/></svg><span style="left:606px">成功</span><span style="left:706px">3h 25min 46s</span></div><div class="tr" style="top:220px"><span style="left:17px">task_01</span><span style="left:164px">任务流</span><span style="left:276px">周期执行</span><span style="left:422px">2020/03/10 15:44:22</span><svg class="si" style="left:590px" viewBox="0 0 12 12"><circle cx="6" cy="6" r="6" fill="#3cc08e"/><path d="M2.7 6.2l2.4 2.3 4.3-4.4" fill="none" stroke="#fff" stroke-width="1.7"/></svg><span style="left:606px">成功</span><span style="left:706px">3h 25min 46s</span></div><div class="tr" style="top:256px"><span style="left:17px">task_01</span><span style="left:164px">任务流</span><span style="left:276px">周期执行</span><span style="left:422px">2020/03/10 15:44:22</span><svg class="si" style="left:590px" viewBox="0 0 12 12"><circle cx="6" cy="6" r="6" fill="#3cc08e"/><path d="M2.7 6.2l2.4 2.3 4.3-4.4" fill="none" stroke="#fff" stroke-width="1.7"/></svg><span style="left:606px">成功</span><span style="left:706px">3h 25min 46s</span></div><div class="tr" style="top:292px"><span style="left:17px">task_01</span><span style="left:164px">任务流</span><span style="left:276px">周期执行</span><span style="left:422px">2020/03/10 15:44:22</span><svg class="si" style="left:590px" viewBox="0 0 12 12"><circle cx="6" cy="6" r="6" fill="#3cc08e"/><path d="M2.7 6.2l2.4 2.3 4.3-4.4" fill="none" stroke="#fff" stroke-width="1.7"/></svg><span style="left:606px">成功</span><span style="left:706px">3h 25min 46s</span></div><div class="tr" style="top:328px"><span style="left:17px">task_01</span><span style="left:164px">任务流</span><span style="left:276px">周期执行</span><span style="left:422px">2020/03/10 15:44:22</span><svg class="si" style="left:590px" viewBox="0 0 12 12"><circle cx="6" cy="6" r="6" fill="#3cc08e"/><path d="M2.7 6.2l2.4 2.3 4.3-4.4" fill="none" stroke="#fff" stroke-width="1.7"/></svg><span style="left:606px">成功</span><span style="left:706px">3h 25min 46s</span></div><div class="tr" style="top:364px"><span style="left:17px">task_01</span><span style="left:164px">任务流</span><span style="left:276px">周期执行</span><span style="left:422px">2020/03/10 15:44:22</span><svg class="si" style="left:590px" viewBox="0 0 12 12"><circle cx="6" cy="6" r="6" fill="#3cc08e"/><path d="M2.7 6.2l2.4 2.3 4.3-4.4" fill="none" stroke="#fff" stroke-width="1.7"/></svg><span style="left:606px">成功</span><span style="left:706px">3h 25min 46s</span></div><div class="tr" style="top:400px"><span style="left:17px">task_01</span><span style="left:164px">任务流</span><span style="left:276px">周期执行</span><span style="left:422px">2020/03/10 15:44:22</span><svg class="si" style="left:590px" viewBox="0 0 12 12"><circle cx="6" cy="6" r="6" fill="#3cc08e"/><path d="M2.7 6.2l2.4 2.3 4.3-4.4" fill="none" stroke="#fff" stroke-width="1.7"/></svg><span style="left:606px">成功</span><span style="left:706px">3h 25min 46s</span></div></div><!--/c4-->
</body>
</html>
